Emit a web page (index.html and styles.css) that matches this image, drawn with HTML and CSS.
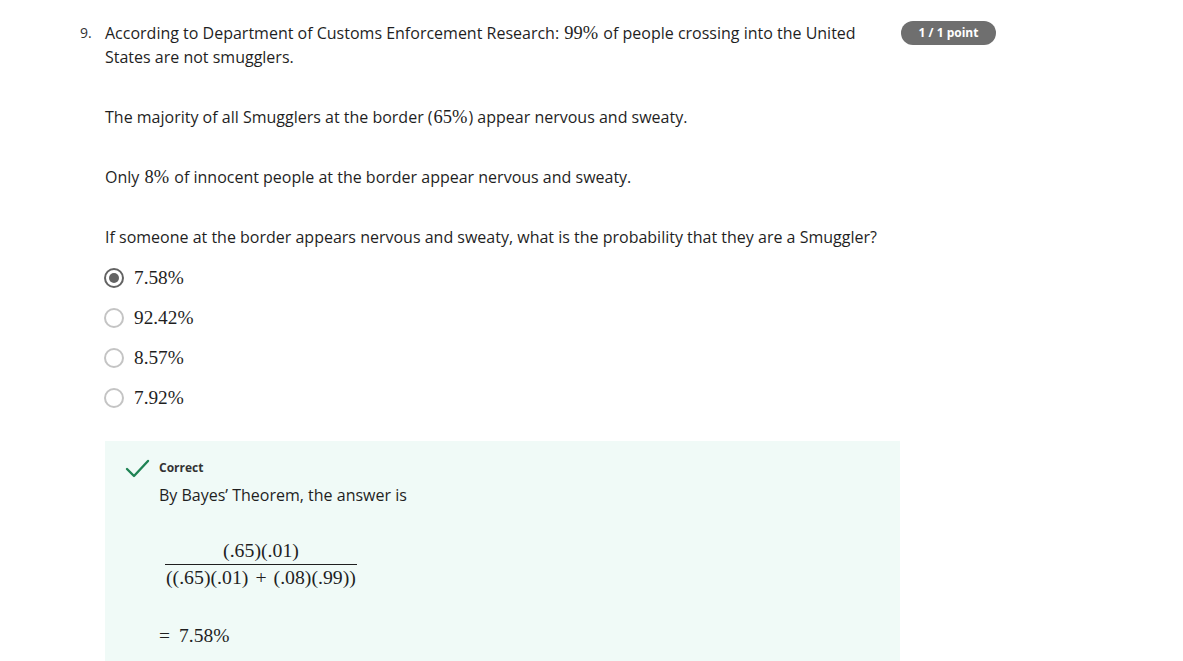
FILE: index.html
```html
<!DOCTYPE html>
<html lang="en">
<head>
<meta charset="utf-8">
<title>Question 9</title>
<link rel="stylesheet" href="styles.css">
</head>
<body>
<div class="question">
  <div class="q-num">9.</div>
  <div class="q-body">
    <p class="para">According to Department of Customs Enforcement Research: <span class="math">99%</span> of people crossing into the United States are not smugglers.</p>
    <p class="para">The majority of all Smugglers at the border (<span class="math">65%</span>) appear nervous and sweaty.</p>
    <p class="para">Only <span class="math">8%</span> of innocent people at the border appear nervous and sweaty.</p>
    <p class="para last">If someone at the border appears nervous and sweaty, what is the probability that they are a Smuggler?</p>
    <div class="options">
      <div class="option"><span class="radio checked"></span><span class="math opt-label">7.58%</span></div>
      <div class="option"><span class="radio"></span><span class="math opt-label">92.42%</span></div>
      <div class="option"><span class="radio"></span><span class="math opt-label">8.57%</span></div>
      <div class="option"><span class="radio"></span><span class="math opt-label">7.92%</span></div>
    </div>
    <div class="feedback">
      <div class="fb-head">
        <svg class="check" width="26" height="22" viewBox="0 0 26 22"><polyline points="3,12 10,19 24,4" fill="none" stroke="#1f8354" stroke-width="2.4" stroke-linecap="round" stroke-linejoin="round"/></svg>
        <span class="fb-title">Correct</span>
      </div>
      <div class="fb-body">
        <p class="fb-text">By Bayes’ Theorem, the answer is</p>
        <div class="frac math">
          <span class="frac-num">(.65)(.01)</span>
          <span class="frac-den">((.65)(.01)<span class="op">+</span>(.08)(.99))</span>
        </div>
        <p class="result math"><span class="eq">=</span>7.58%</p>
      </div>
    </div>
  </div>
  <div class="q-side">
    <span class="badge">1 / 1 point</span>
  </div>
</div>
</body>
</html>
```
FILE: styles.css
```css
html, body {
  margin: 0;
  padding: 0;
  background: #ffffff;
}
body {
  font-family: "Open Sans", "Noto Sans", sans-serif;
  color: #1f1f1f;
  font-size: 16px;
  line-height: 24px;
}
.question {
  display: flex;
  padding: 21px 0 0 80px;
}
.q-num {
  width: 25px;
  font-size: 14px;
  line-height: 24px;
  color: #333;
}
.q-body {
  width: 795px;
}
.para {
  margin: 0 0 36px 0;
  padding-right: 10px;
}
.para.last {
  margin-bottom: 9px;
}
.math {
  font-family: "Liberation Serif", "DejaVu Serif", serif;
  font-size: 18.5px;
}
.para .math {
  line-height: 1;
  display: inline-block;
  padding: 0 1px;
}
.options {
  display: flex;
  flex-direction: column;
}
.option {
  display: flex;
  align-items: center;
  height: 40px;
}
.radio {
  box-sizing: border-box;
  width: 20px;
  height: 20px;
  border-radius: 50%;
  border: 2px solid #c4c4c4;
  margin-left: -1px;
  margin-right: 10px;
  display: flex;
  align-items: center;
  justify-content: center;
}
.radio.checked {
  border-color: #636363;
}
.radio.checked::after {
  content: "";
  width: 10px;
  height: 10px;
  border-radius: 50%;
  background: #636363;
}
.opt-label {
  color: #1f1f1f;
  font-size: 19.3px;
}
.feedback {
  margin-top: 23px;
  background: #f0faf7;
  padding: 18px 20px 30px 19px;
}
.fb-head {
  display: flex;
  align-items: center;
  height: 18px;
}
.check {
  margin: 0 9px 0 0;
}
.fb-title {
  font-size: 12px;
  font-weight: 700;
  line-height: 18px;
  color: #333;
}
.fb-body {
  padding-left: 35px;
}
.fb-text {
  margin: 6px 0 0 0;
}
.frac {
  display: inline-flex;
  flex-direction: column;
  align-items: center;
  margin: 33px 0 0 6px;
  font-size: 19.8px;
}
.frac-num {
  line-height: 20px;
  padding-bottom: 4px;
}
.frac-den {
  line-height: 20px;
  border-top: 1px solid #1f1f1f;
  padding: 2px 1px 0 1px;
}
.op {
  margin: 0 7px;
}
.result {
  margin: 37px 0 0 0;
  line-height: 24px;
  font-size: 19.5px;
}
.eq {
  margin-right: 9px;
}
.q-side {
  padding-left: 1px;
}
.badge {
  display: block;
  width: 95px;
  height: 24px;
  line-height: 24px;
  border-radius: 12px;
  background: #6f6f6f;
  color: #ffffff;
  font-size: 12px;
  font-weight: 700;
  text-align: center;
}
```
